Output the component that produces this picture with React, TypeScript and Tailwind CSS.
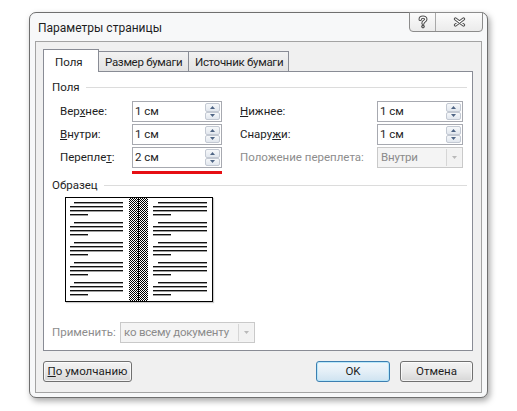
import React from "react";

function HelpIcon() {
  const d = "M2.2 4.4 C2.2 1.4 7.8 1.4 7.8 4.2 C7.8 6.2 5 6 5 8.2";
  return (
    <svg width="10" height="14" viewBox="0 0 10 14">
      <path d={d} fill="none" stroke="#505050" strokeWidth="3.4" strokeLinecap="round" />
      <circle cx="5" cy="11.6" r="1.8" fill="#505050" />
      <path d={d} fill="none" stroke="#fff" strokeWidth="1.3" strokeLinecap="round" />
      <circle cx="5" cy="11.6" r="0.6" fill="#fff" />
    </svg>
  );
}

function CloseIcon() {
  const d = "M2.5 2 L10.5 8 M10.5 2 L2.5 8";
  return (
    <svg width="13" height="10" viewBox="0 0 13 10">
      <path d={d} stroke="#505050" strokeWidth="3.2" strokeLinecap="round" />
      <path d={d} stroke="#fff" strokeWidth="1.2" strokeLinecap="round" />
    </svg>
  );
}

function Arrow({ up, color = "#4f6585" }: { up?: boolean; color?: string }) {
  return (
    <svg width="5" height="3" viewBox="0 0 5 3">
      <path d={up ? "M0 3 L2.5 0 L5 3 Z" : "M0 0 L5 0 L2.5 3 Z"} fill={color} />
    </svg>
  );
}

function SpinBox({ value, className }: { value: string; className: string }) {
  return (
    <div className={`flex h-[21px] border border-[#a7a9b0] bg-white ${className}`}>
      <div className="flex flex-1 items-center pl-[2px] leading-none">{value}</div>
      <div className="mr-px flex w-[15px] flex-col py-px">
        <div className="flex flex-1 items-center justify-center rounded-[2px] border border-[#c3c9d3] bg-gradient-to-b from-[#f6f8fa] to-[#e2e7ee]">
          <Arrow up />
        </div>
        <div className="flex flex-1 items-center justify-center rounded-[2px] border border-[#c3c9d3] bg-gradient-to-b from-[#f6f8fa] to-[#e2e7ee]">
          <Arrow />
        </div>
      </div>
    </div>
  );
}

function DisabledCombo({ value, className }: { value: string; className: string }) {
  return (
    <div className={`flex h-[21px] border border-[#c9c9c9] bg-[#f4f4f4] text-[#8b8b8b] ${className}`}>
      <div className="flex flex-1 items-center overflow-hidden pl-[3px] leading-none tracking-[-0.2px]">{value}</div>
      <div className="my-px mr-px flex w-[15px] items-center justify-center border-l border-[#d6d6d6] bg-[#f2f2f2]">
        <Arrow color="#b9b9b9" />
      </div>
    </div>
  );
}

function Preview() {
  const groups = [0, 1, 2, 3, 4];
  const pages = [
    { x: 5, indent: 9, end: 58, short: 23 },
    { x: 88, indent: 93, end: 142, short: 106 },
  ];
  return (
    <svg width="148" height="105" viewBox="0 0 148 105" className="shadow-[1px_1px_1px_rgba(0,0,0,0.2)]">
      <defs>
        <pattern id="chk" width="2" height="2" patternUnits="userSpaceOnUse">
          <rect width="2" height="2" fill="#fff" shapeRendering="crispEdges" />
          <rect width="1" height="1" fill="#000" shapeRendering="crispEdges" />
          <rect x="1" y="1" width="1" height="1" fill="#000" shapeRendering="crispEdges" />
        </pattern>
      </defs>
      <rect x="0" y="0" width="148" height="105" fill="#fff" />
      <rect x="64" y="0" width="9" height="105" fill="url(#chk)" shapeRendering="crispEdges" />
      <rect x="74" y="0" width="9" height="105" fill="url(#chk)" shapeRendering="crispEdges" />
      <rect x="73" y="0" width="1" height="105" fill="#000" />
      {pages.map((p) =>
        groups.map((g) => {
          const y = 5 + g * 20;
          return (
            <g key={`${p.x}-${g}`} fill="#111">
              <rect x={p.indent} y={y} width={p.end - p.indent} height="1.4" />
              <rect x={p.x} y={y + 4} width={p.end - p.x} height="1.4" />
              <rect x={p.x} y={y + 8} width={p.end - p.x} height="1.4" />
              <rect x={p.x} y={y + 12} width={p.short - p.x} height="1.4" />
            </g>
          );
        })
      )}
      <rect x="0.5" y="0.5" width="147" height="104" fill="none" stroke="#000" />
    </svg>
  );
}

function GroupHeader({ title }: { title: string }) {
  return (
    <div className="flex h-[16px] items-center">
      <span className="leading-[16px]">{title}</span>
      <div className="ml-[6px] h-px flex-1 bg-[#dcdcdc]" />
    </div>
  );
}

function Button({ children, className = "" }: { children: React.ReactNode; className?: string }) {
  return (
    <div
      className={`flex h-[21px] items-center justify-center rounded-[3px] border border-[#707070] bg-gradient-to-b from-[#f3f3f3] via-[#e9e9e9] to-[#d6d6d6] shadow-[inset_0_0_0_1px_rgba(255,255,255,0.7)] ${className}`}
    >
      {children}
    </div>
  );
}

export default function App() {
  return (
    <div className="min-h-[411px] w-[517px] whitespace-nowrap bg-white pl-[29px] pt-[12px] font-['Roboto',sans-serif] text-[11.5px] text-[#1e1e1e]">
      <div className="flex h-[386px] w-[459px] flex-col rounded-[7px] border border-[#6f6f6f] bg-[#f7f8f9] shadow-[2px_3px_6px_rgba(0,0,0,0.35)]">
        {/* title bar */}
        <div className="flex h-[28px] items-start justify-between">
          <div className="pl-[8px] pt-[7px] text-[12px] leading-[16px]">Параметры страницы</div>
          <div className="-mt-px mr-[4px] flex h-[20px] rounded-b-[4px] border border-[#8c8c8c] bg-gradient-to-b from-[#fbfbfb] to-[#ebebeb]">
            <div className="flex w-[26px] items-center justify-center border-r border-[#a8a8a8]">
              <HelpIcon />
            </div>
            <div className="flex w-[46px] items-center justify-center">
              <CloseIcon />
            </div>
          </div>
        </div>

        {/* client area */}
        <div className="mx-[5px] mb-[4px] flex flex-1 flex-col border border-[#a3a3a3] bg-[#f0f0f0] pl-[7px] pr-[8px] pt-[7px]">
          {/* tabs */}
          <div className="relative z-10 -mb-px flex h-[23px] items-end">
            <div className="h-[23px] w-[56px] border-x border-t border-[#898c95] bg-white pl-[11px] pt-[4px] leading-[16px]">
              Поля
            </div>
            <div className="h-[21px] w-[90px] border-y border-r border-[#898c95] bg-gradient-to-b from-[#f2f2f2] to-[#e3e3e3] pl-[6px] pt-[2px] leading-[16px] tracking-[-0.3px]">
              Размер бумаги
            </div>
            <div className="h-[21px] w-[100px] border-y border-r border-[#898c95] bg-gradient-to-b from-[#f2f2f2] to-[#e3e3e3] pl-[6px] pt-[2px] leading-[16px] tracking-[-0.3px]">
              Источник бумаги
            </div>
          </div>

          {/* tab page */}
          <div className="flex h-[280px] flex-col border border-[#898c95] bg-white pl-[8px] pr-[5px] pt-[7px]">
            <GroupHeader title="Поля" />

            <div className="mt-[6px] flex flex-col gap-[2px]">
              <div className="flex items-center">
                <div className="w-[80px] pl-[8px]">
                  Вер<span className="underline">х</span>нее:
                </div>
                <SpinBox value="1 см" className="w-[90px]" />
                <div className="ml-[18px] w-[137px]">
                  <span className="underline">Н</span>ижнее:
                </div>
                <SpinBox value="1 см" className="w-[86px]" />
              </div>
              <div className="flex items-center">
                <div className="w-[80px] pl-[8px]">
                  <span className="underline">В</span>нутри:
                </div>
                <SpinBox value="1 см" className="w-[90px]" />
                <div className="ml-[18px] w-[137px]">
                  Снару<span className="underline">ж</span>и:
                </div>
                <SpinBox value="1 см" className="w-[86px]" />
              </div>
              <div className="flex items-center">
                <div className="w-[80px] pl-[8px]">
                  Перепле<span className="underline">т</span>:
                </div>
                <SpinBox value="2 см" className="w-[90px]" />
                <div className="ml-[18px] w-[137px] text-[#8d8d8d]">Положение переплета:</div>
                <DisabledCombo value="Внутри" className="w-[86px]" />
              </div>
            </div>

            <div className="ml-[80px] mt-[3px] h-[3px] w-[90px] bg-[#e60f14]" />

            <div className="mt-[3px]">
              <GroupHeader title="Образец" />
            </div>

            <div className="ml-[13px] mt-[4px]">
              <Preview />
            </div>

            <div className="mt-[20px] flex items-center">
              <div className="w-[68px] text-[#8d8d8d]">Применить:</div>
              <DisabledCombo value="ко всему документу" className="w-[135px]" />
            </div>
          </div>

          {/* buttons */}
          <div className="mt-[10px] flex">
            <Button className="w-[89px]">
              <span>
                <span className="underline">П</span>о умолчанию
              </span>
            </Button>
            <div
              className="ml-auto flex h-[21px] w-[74px] items-center justify-center rounded-[3px] border border-[#3c7fb1] bg-gradient-to-b from-[#f1f7fb] via-[#e4eff7] to-[#cfe3f1] shadow-[inset_0_0_0_1px_rgba(180,230,250,0.9)]"
            >
              OK
            </div>
            <Button className="ml-[10px] w-[73px]">Отмена</Button>
          </div>
        </div>
      </div>
    </div>
  );
}
